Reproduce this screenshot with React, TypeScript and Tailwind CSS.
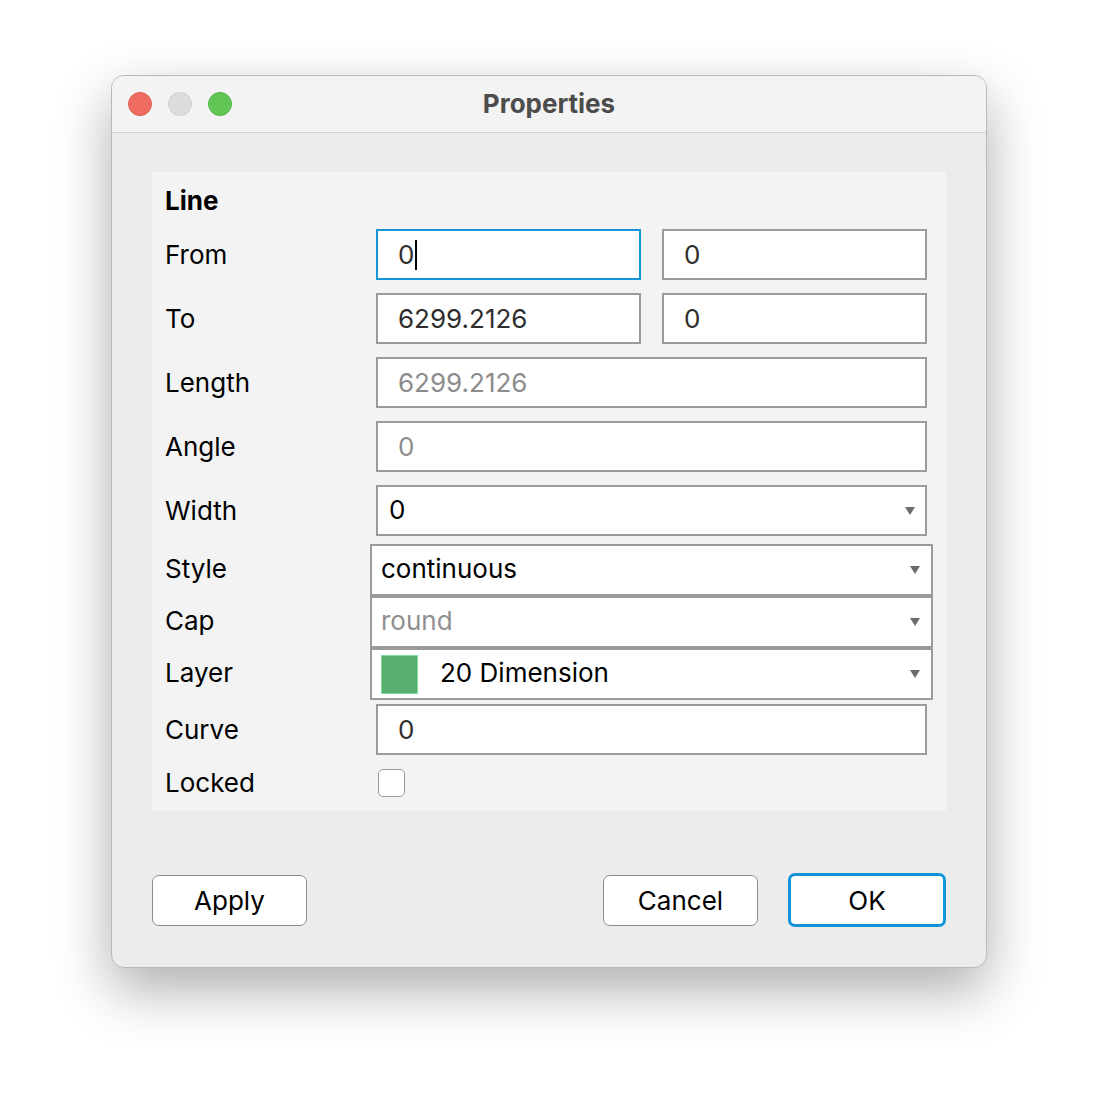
import { useState } from "react";

const font = { fontFamily: "Inter, 'Liberation Sans', sans-serif" };

function Arrow() {
  return (
    <svg width="12" height="10" viewBox="0 0 12 10" className="shrink-0">
      <path d="M1 1 H11 L6 9 Z" fill="#6b6b6b" />
    </svg>
  );
}

function TextBox({
  value,
  focused,
  disabled,
  caret,
}: {
  value: string;
  focused?: boolean;
  disabled?: boolean;
  caret?: boolean;
}) {
  return (
    <div
      className={
        "flex h-[51px] flex-1 items-center bg-white pl-[20px] border-2 " +
        (focused ? "border-[#1596d6]" : "border-[#9b9b9b]")
      }
    >
      <span className={disabled ? "text-[#8c8c8c]" : "text-[#2e2e2e]"}>{value}</span>
      {caret && <span className="ml-[1px] h-[30px] w-[2px] bg-black" />}
    </div>
  );
}

function Row({
  label,
  children,
  className = "",
  labelClass = "",
}: {
  label: string;
  children: React.ReactNode;
  className?: string;
  labelClass?: string;
}) {
  return (
    <div className={"flex items-center " + className}>
      <div className={"w-[211px] shrink-0 text-black " + labelClass}>{label}</div>
      <div className="flex flex-1 gap-[21px]">{children}</div>
    </div>
  );
}

function Combo({ children, disabled }: { children: React.ReactNode; disabled?: boolean }) {
  return (
    <div className="-mx-[6px] flex h-[52px] flex-1 items-center border-2 border-[#9b9b9b] bg-white pl-[9px] pr-[10px]">
      <div className={"flex flex-1 items-center pb-[4px] " + (disabled ? "text-[#8f8f8f]" : "text-black")}>{children}</div>
      <Arrow />
    </div>
  );
}

export default function App() {
  const [locked, setLocked] = useState(false);

  return (
    <div className="h-[1116px] w-[1098px] bg-white pl-[111px] pt-[75px] text-[26px]" style={font}>
      <div className="flex h-[893px] w-[876px] flex-col overflow-hidden rounded-[13px] border border-[#b9b9b9] bg-[#ececec] shadow-[0_22px_55px_rgba(0,0,0,0.32)]">
        {/* title bar */}
        <div className="relative flex h-[57px] shrink-0 items-center border-b border-[#d2d2d2] bg-[#f3f3f3] pl-[16px]">
          <div className="flex gap-[16px]">
            <span className="h-[24px] w-[24px] rounded-full border border-[#de5a4f] bg-[#ee6b5f]" />
            <span className="h-[24px] w-[24px] rounded-full border border-[#cfcfcf] bg-[#dcdcdc]" />
            <span className="h-[24px] w-[24px] rounded-full border border-[#52b548] bg-[#62c655]" />
          </div>
          <div className="pointer-events-none absolute inset-x-0 top-0 flex h-full items-center justify-center pb-[2px] font-bold text-[#4c4c4c]">
            Properties
          </div>
        </div>

        {/* body */}
        <div className="flex flex-1 flex-col px-[40px] pt-[39px]">
          <div className="flex h-[639px] flex-col bg-[#f3f3f3] pl-[13px] pr-[19px] pt-[8px]">
            <div className="flex h-[40px] items-center font-bold text-black">Line</div>
            <Row label="From" className="mt-[9px]">
              <TextBox value="0" focused caret />
              <TextBox value="0" />
            </Row>
            <Row label="To" className="mt-[13px]">
              <TextBox value="6299.2126" />
              <TextBox value="0" />
            </Row>
            <Row label="Length" className="mt-[13px]">
              <TextBox value="6299.2126" disabled />
            </Row>
            <Row label="Angle" className="mt-[13px]">
              <TextBox value="0" disabled />
            </Row>
            <Row label="Width" className="mt-[13px]">
              <div className="flex h-[51px] flex-1 items-center border-2 border-[#9b9b9b] bg-white pl-[11px] pr-[9px]">
                <span className="flex-1 pb-[3px] text-black">0</span>
                <Arrow />
              </div>
            </Row>
            <Row label="Style" className="mt-[8px]" labelClass="pb-[3px]">
              <Combo>continuous</Combo>
            </Row>
            <Row label="Cap" labelClass="pb-[3px]">
              <Combo disabled>round</Combo>
            </Row>
            <Row label="Layer" labelClass="pb-[3px]">
              <Combo>
                <span className="mr-[22px] mt-[4px] h-[39px] w-[37px] border border-[#84dc9c] bg-[#58ae71]" />
                20 Dimension
              </Combo>
            </Row>
            <Row label="Curve" className="mt-[4px]">
              <TextBox value="0" />
            </Row>
            <Row label="Locked" className="mt-[8px]">
              <button
                onClick={() => setLocked(!locked)}
                className="ml-[2px] h-[28px] w-[27px] rounded-[5px] border-[1.5px] border-[#9a9a9a] bg-white"
              />
            </Row>
          </div>

          <div className="mt-[62px] flex items-center">
            <button className="h-[51px] w-[155px] rounded-[7px] border-[1.5px] border-[#8c8c8c] bg-white text-black">
              Apply
            </button>
            <div className="flex-1" />
            <button className="h-[51px] w-[155px] rounded-[7px] border-[1.5px] border-[#8c8c8c] bg-white text-black">
              Cancel
            </button>
            <button className="ml-[30px] h-[54px] w-[158px] rounded-[7px] border-[3px] border-[#0f95d8] bg-white text-black">
              OK
            </button>
          </div>
        </div>
      </div>
    </div>
  );
}
